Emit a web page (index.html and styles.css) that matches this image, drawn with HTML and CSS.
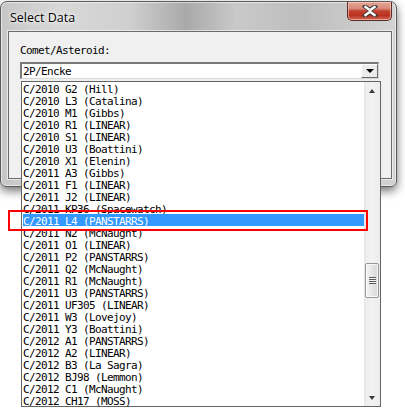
FILE: index.html
```html
<!DOCTYPE html>
<html>
<head>
<meta charset="utf-8">
<link rel="stylesheet" href="styles.css">
</head>
<body>
<div class="stage">
  <div class="window">
    <div class="titlebar">
      <span class="title">Select Data</span>
      <div class="close">
        <svg width="16" height="12" viewBox="0 0 16 12">
          <path d="M3 1.5 L8 5 L13 1.5 M3 10.5 L8 7 L13 10.5" stroke="#3a3a3a" stroke-width="4.2" fill="none" stroke-linecap="square"/>
          <path d="M3.5 2 L8 5.2 L12.5 2 M3.5 10 L8 6.8 L12.5 10 M8 5 L8 7" stroke="#ffffff" stroke-width="2.4" fill="none" stroke-linecap="square"/>
        </svg>
      </div>
    </div>
    <div class="client">
      <div class="label">Comet/Asteroid:</div>
      <div class="combo">
        <span class="combo-text">2P/Encke</span>
        <div class="dd-btn"><span class="tri-down"></span></div>
      </div>
    </div>
  </div>

  <div class="droplist">
    <div class="rows">
      <div class="row">C/2010 G2 (Hill)</div>
      <div class="row">C/2010 L3 (Catalina)</div>
      <div class="row">C/2010 M1 (Gibbs)</div>
      <div class="row">C/2010 R1 (LINEAR)</div>
      <div class="row">C/2010 S1 (LINEAR)</div>
      <div class="row">C/2010 U3 (Boattini)</div>
      <div class="row">C/2010 X1 (Elenin)</div>
      <div class="row">C/2011 A3 (Gibbs)</div>
      <div class="row">C/2011 F1 (LINEAR)</div>
      <div class="row">C/2011 J2 (LINEAR)</div>
      <div class="row">C/2011 KP36 (Spacewatch)</div>
      <div class="row selected">C/2011 L4 (PANSTARRS)</div>
      <div class="row">C/2011 N2 (McNaught)</div>
      <div class="row">C/2011 O1 (LINEAR)</div>
      <div class="row">C/2011 P2 (PANSTARRS)</div>
      <div class="row">C/2011 Q2 (McNaught)</div>
      <div class="row">C/2011 R1 (McNaught)</div>
      <div class="row">C/2011 U3 (PANSTARRS)</div>
      <div class="row">C/2011 UF305 (LINEAR)</div>
      <div class="row">C/2011 W3 (Lovejoy)</div>
      <div class="row">C/2011 Y3 (Boattini)</div>
      <div class="row">C/2012 A1 (PANSTARRS)</div>
      <div class="row">C/2012 A2 (LINEAR)</div>
      <div class="row">C/2012 B3 (La Sagra)</div>
      <div class="row">C/2012 BJ98 (Lemmon)</div>
      <div class="row">C/2012 C1 (McNaught)</div>
      <div class="row">C/2012 CH17 (MOSS)</div>
    </div>
    <div class="scrollbar">
      <div class="sb-arrow"><span class="tri-up-small"></span></div>
      <div class="sb-track">
        <div class="sb-space"></div>
        <div class="sb-thumb">
          <div class="grip"></div>
        </div>
      </div>
      <div class="sb-arrow"><span class="tri-down-small"></span></div>
    </div>
  </div>

  <div class="annot"></div>
</div>
</body>
</html>
```

FILE: styles.css
```css
html, body {
  margin: 0;
  padding: 0;
  background: #ffffff;
}

.stage {
  position: relative;
  width: 405px;
  height: 412px;
  overflow: hidden;
}

.window {
  width: 397px;
  height: 186px;
  box-sizing: border-box;
  margin-top: 1px;
  border: 1px solid #5a5a5a;
  border-radius: 7px 7px 6px 6px;
  background: linear-gradient(90deg, #c6c6c6 0, #d8d8d8 60px, #cfcfcf 130px, #a9a9a9 185px, #c9c9c9 235px, #bebebe 300px, #d2d2d2 390px);
  box-shadow: 0 4px 10px rgba(0, 0, 0, 0.55), inset 0 0 0 1px rgba(255, 255, 255, 0.55);
  display: flex;
  flex-direction: column;
  padding: 0 4px 7px 7px;
}

.titlebar {
  height: 29px;
  display: flex;
  align-items: flex-start;
  justify-content: space-between;
  flex: none;
}

.title {
  font-family: "Open Sans", "Noto Sans", sans-serif;
  font-size: 12.5px;
  color: #000;
  margin-top: 7px;
  margin-left: 2px;
  text-shadow: 0 0 6px #ffffff, 0 0 3px #ffffff;
}

.close {
  width: 45px;
  height: 19px;
  box-sizing: border-box;
  border: 1px solid #5d2b25;
  border-top: none;
  border-radius: 0 0 5px 5px;
  background: linear-gradient(180deg, #e6a495 0, #d88c7c 35%, #c2422f 50%, #b8321f 75%, #d26a55 100%);
  box-shadow: inset 0 0 0 1px rgba(255, 220, 210, 0.55);
  display: flex;
  align-items: center;
  justify-content: center;
}

.client {
  flex: 1;
  background: #f0f0f0;
  border: 1px solid #6b6b6b;
  box-shadow: 0 0 0 1px rgba(255, 255, 255, 0.6);
  position: relative;
  padding: 13px 0 0 11px;
}

.label {
  font-family: "DejaVu Sans Mono", "Liberation Mono", monospace;
  font-size: 11px;
  letter-spacing: -0.62px;
  line-height: 12px;
  color: #000;
  height: 17px;
}

.combo {
  width: 359px;
  height: 17px;
  box-sizing: border-box;
  background: #fff;
  border-top: 2px solid #7a7a7a;
  border-left: 2px solid #7a7a7a;
  border-right: 1px solid #d8d8d8;
  border-bottom: 1px solid #d8d8d8;
  display: flex;
  align-items: stretch;
  justify-content: space-between;
}

.combo-text {
  font-family: "DejaVu Sans Mono", "Liberation Mono", monospace;
  font-size: 11px;
  letter-spacing: -0.62px;
  line-height: 15px;
  padding-left: 1px;
  color: #000;
}

.dd-btn {
  width: 17px;
  box-sizing: border-box;
  background: #ececec;
  border-top: 1px solid #fff;
  border-left: 1px solid #fff;
  border-right: 1px solid #6a6a6a;
  border-bottom: 1px solid #6a6a6a;
  display: flex;
  align-items: center;
  justify-content: center;
}

.tri-down {
  width: 0;
  height: 0;
  border-left: 4px solid transparent;
  border-right: 4px solid transparent;
  border-top: 4px solid #000;
}

/* dropped-down list overlays the dialog */
.droplist {
  position: absolute;
  left: 21px;
  top: 81px;
  width: 360px;
  height: 326px;
  box-sizing: border-box;
  border: 1px solid #646464;
  background: #fff;
  display: flex;
}

.rows {
  flex: 1;
  display: flex;
  flex-direction: column;
}

.row {
  height: 12px;
  line-height: 15px;
  padding-left: 1px;
  font-family: "DejaVu Sans Mono", "Liberation Mono", monospace;
  font-size: 11px;
  letter-spacing: -0.62px;
  color: #000;
  white-space: pre;
  overflow: visible;
}

.row.selected {
  background: #3399ff;
  color: #fff;
  margin-left: 1px;
  padding-left: 0;
}

.scrollbar {
  width: 16px;
  display: flex;
  flex-direction: column;
  background: linear-gradient(90deg, #e3e3e3 0, #eeeeee 2px, #f2f2f2 8px, #ededed 16px);
}

.sb-arrow {
  height: 17px;
  display: flex;
  align-items: center;
  justify-content: center;
}

.tri-up-small {
  width: 0;
  height: 0;
  border-left: 3.5px solid transparent;
  border-right: 3.5px solid transparent;
  border-bottom: 4px solid #3c3c3c;
}

.tri-down-small {
  width: 0;
  height: 0;
  border-left: 3.5px solid transparent;
  border-right: 3.5px solid transparent;
  border-top: 4px solid #3c3c3c;
}

.sb-track {
  flex: 1;
  display: flex;
  flex-direction: column;
}

.sb-space {
  height: 164px;
}

.sb-thumb {
  height: 35px;
  margin: 0 1px 0 1px;
  box-sizing: border-box;
  border: 1px solid #979797;
  border-radius: 2px;
  background: linear-gradient(90deg, #f4f4f4 0, #e6e6e6 50%, #d6d6d6 100%);
  box-shadow: inset 0 0 0 1px rgba(255, 255, 255, 0.8);
  display: flex;
  align-items: center;
  justify-content: center;
}

.grip {
  width: 7px;
  height: 7px;
  background: repeating-linear-gradient(180deg, #5a5a5a 0, #5a5a5a 1px, #f4f4f4 1px, #f4f4f4 2px);
}

.annot {
  position: absolute;
  left: 8px;
  top: 210px;
  width: 360px;
  height: 21px;
  box-sizing: border-box;
  border: 2px solid #ff0000;
}
```
